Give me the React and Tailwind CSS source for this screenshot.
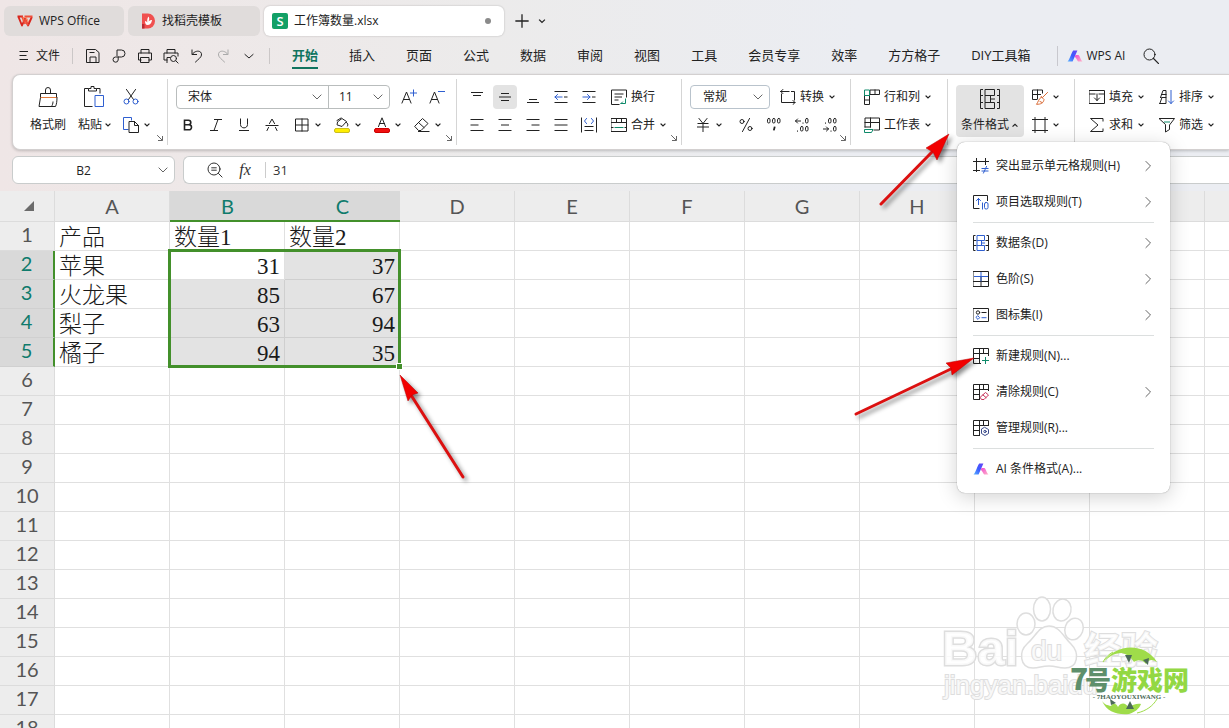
import React from "react";

const BLUE = "#2f5fd0";
const GREEN = "#0e8a6a";

function Ic({ children, className = "size-4", box = "0 0 16 16" }) {
  return (
    <svg aria-hidden="true" viewBox={box} className={`shrink-0 ${className}`} fill="none" stroke="currentColor" strokeWidth="1" strokeLinecap="square">
      {children}
    </svg>
  );
}

function Caret({ up }) {
  return (
    <Ic className="size-2" box="0 0 8 8">
      <path d={up ? "M2 5.2 4 3.4 6 5.2" : "M2 3 4 5 6 3"} strokeWidth="1.2" />
    </Ic>
  );
}

function WideCaret() {
  return (
    <Ic className="pointer-events-none absolute right-[5px] top-1/2 size-3 -translate-y-1/2 text-[#666]" box="0 0 12 12">
      <path d="M2 4l4 4 4-4" />
    </Ic>
  );
}

function Launcher() {
  return (
    <button aria-label="更多设置" className="absolute bottom-[3px] right-[3px] text-[#666]">
      <Ic className="size-2" box="0 0 8 8">
        <path d="M1.500 1.500 6 6M6.500 2.500v4h-4" />
      </Ic>
    </button>
  );
}

function AiMark() {
  return (
    <svg aria-hidden="true" viewBox="0 0 16 16" className="size-4 shrink-0">
      <defs>
        <linearGradient id="aiBlue" x1="0" y1="1" x2="1" y2="0">
          <stop offset="0" stopColor="#5ab4ff" />
          <stop offset=".5" stopColor="#3b5bff" />
          <stop offset="1" stopColor="#6a45f5" />
        </linearGradient>
        <linearGradient id="aiPink" x1="0" y1="0" x2="1" y2="1">
          <stop offset="0" stopColor="#f04bd0" />
          <stop offset="1" stopColor="#ffb3c8" />
        </linearGradient>
      </defs>
      <path d="M6.200 2.400h4.200L5.600 13.600H.5c2.200-2 3.500-8 5.700-11.200z" fill="url(#aiBlue)" />
      <path d="M8.500 7h2.800c1.300 0 2.200 4.600 4.200 6.600h-3.700C10.200 13.600 9.600 9.500 7.600 9z" fill="url(#aiPink)" />
    </svg>
  );
}

const quick = [
  ["保存", <path key="a" d="M2 1.500h8.500l3.500 3v10H2zM5 14V9h6v5M5 4.500h4" />],
  ["分享", <path key="a" d="M6 7.500V2h4.500a3.300 3.300 0 0 1 0 7H4.500a2.600 2.600 0 1 0 2.700 3V9" />],
  ["打印", <path key="a" d="M4 5V1.500h8V5M4 12H1.500V5h13v7H12M4 9.500h8v5H4z" />],
  ["打印预览", <g key="a"><path d="M4 5V1.500h8V5M4 12H1V5h14v3M4 14.500V9.500h3" /><circle cx="10.500" cy="10.500" r="3" /><path d="m13 13 2 2" /></g>],
  ["撤销", <path key="a" d="M3 2v4.500h4.500M3.500 6C6 2 13 2 12.500 7c-.3 2.500-3.500 4.500-6 7" />],
  ["恢复", <path key="a" className="text-[#aaa]" stroke="currentColor" d="M13 2v4.500H8.500M12.500 6C10 2 3 2 3.500 7c.3 2.500 3.500 4.500 6 7" />],
];

const tabs = ["开始", "插入", "页面", "公式", "数据", "审阅", "视图", "工具", "会员专享", "效率", "方方格子", "DIY工具箱"];

function TitleBar() {
  return (
    <header className="flex items-center gap-1 pl-1 pt-1.5 text-xs">
      <button className="flex h-[30px] w-[120px] items-center gap-1.5 rounded-md bg-[#e0dcdb] pl-[13px]">
        <svg aria-hidden="true" viewBox="0 0 16 16" className="size-4" fill="none" strokeWidth="1.900" strokeLinejoin="round">
          <path d="M.5 3.500h5.500M1.500 4 5 12.500 8 5.500l3 7L14.800 4" stroke="#d9251d" />
          <path d="M5 3.500 8.200 11M7.500 3.500h8M11 12.500 8 5.500" stroke="#f0503a" />
          <path d="M5.800 7.500 7 4M9 4l2.500 5" stroke="#ff7a4a" strokeWidth="1" />
        </svg>
        WPS Office
      </button>
      <button className="flex h-[30px] w-[132px] items-center gap-1.5 rounded-md bg-[#e0dcdb] pl-3">
        <svg aria-hidden="true" viewBox="0 0 16 16" className="size-4">
          <path d="M2 .5h6A7 7.500 0 0 1 8 15.500H2z" fill="#f0504f" />
          <path d="M2 11h2.500v4.500H2z" fill="#b92c35" />
          <path d="M8.500 3.500c1 1.500 1 3 0 5 1-1 2-1.500 3.500-1.500-.5 3.500-2 5-4.500 5C5.500 12 5 10 5 8c1.200.2 1.800.7 2.300 1.500C7 7 7.300 5 8.500 3.500z" fill="#fff" />
        </svg>
        找稻壳模板
      </button>
      <button className="flex h-[30px] w-[240px] items-center gap-1.5 rounded-md bg-white pl-2 pr-[13px] shadow-[0_0_2px_rgba(0,0,0,0.25)]">
        <span className="flex size-4 items-center justify-center rounded-[2px] bg-[#12a066] text-[13px] font-semibold leading-4 text-white">S</span>
        工作簿数量.xlsx
        <span className="ml-auto size-1.5 rounded-full bg-[#8a8a8a]" />
      </button>
      <button aria-label="新建" className="ml-1.5">
        <Ic className="size-4"><path d="M8 2v12M2 8h12" strokeWidth="1.300" /></Ic>
      </button>
      <button aria-label="标签列表" className="ml-0.5">
        <Ic className="size-3" box="0 0 12 12"><path d="M3.500 5 6 7.500 8.500 5" strokeWidth="1.200" /></Ic>
      </button>
    </header>
  );
}

function MenuRow() {
  return (
    <nav className="flex h-[38px] items-center whitespace-nowrap pt-0.5 text-[13px]">
      <button className="ml-4 flex items-center gap-1 text-xs">
        <Ic><path d="M4 3.500h7.500M4 7.500h6M4 11.500h7.500" /></Ic>
        文件
      </button>
      <span className="ml-3 h-4 w-px bg-[#cbc7c7]" />
      <div className="ml-3 flex items-center gap-2.5">
        {quick.map(([label, art]) => (
          <button key={label} aria-label={label}><Ic>{art}</Ic></button>
        ))}
        <button aria-label="更多命令"><Ic><path d="M4 6.500 8 10l4-3.500" /></Ic></button>
      </div>
      <span className="ml-3 h-4 w-px bg-[#cbc7c7]" />
      <div className="ml-[22px] flex items-center gap-[31px]">
        {tabs.map((t, i) => (
          <button key={t} className={i === 0 ? "h-[26px] border-y-2 border-t-transparent border-b-[#10745f] font-bold text-[#10745f]" : "h-[26px]"}>
            {t}
          </button>
        ))}
      </div>
      <span className="ml-[26px] h-5 w-px bg-[#c8c8ce]" />
      <button className="ml-[9px] flex items-center gap-1 text-xs"><AiMark />WPS AI</button>
      <button aria-label="搜索" className="ml-[18px]">
        <Ic><circle cx="6.500" cy="6.500" r="5.500" /><path d="m10.500 10.500 5 5" strokeWidth="1.200" /></Ic>
      </button>
    </nav>
  );
}

function Tool({ label, text, caret, active, className = "", children }) {
  return (
    <button aria-label={label} className={`flex h-6 items-center gap-1 whitespace-nowrap ${active ? "rounded bg-[#e3e3e3]" : ""} ${className}`}>
      {children}
      {text}
      {caret && <Caret />}
    </button>
  );
}

function Group({ children, className = "" }) {
  return (
    <section className={`relative my-1 flex shrink-0 border-r border-[#d5d5d5] ${className}`}>
      {children}
    </section>
  );
}

const lines = (arr) => arr.map(([x, y, w]) => <path key={`${x}-${y}`} d={`M${x} ${y}h${w}`} />);

const menu = [
  ["突出显示单元格规则(H)", true, <g key="g"><path d="M3.500 .5v13M12.500 .5v6M.5 3.500h15M.5 12.500h6" /><path stroke={BLUE} d="M9 10.500h6M9 13h6M13.500 8.500l-3 6.500" /></g>],
  ["项目选取规则(T)", true, <g key="g"><path d="M6 14.500H.5v-13h14v5" /><path stroke={BLUE} d="M5.500 10.500V4.500M3.500 6.500l2-2 2 2M9.500 9v6" /><rect stroke={BLUE} x="11.500" y="8.500" width="3.500" height="6.500" rx="1.500" /></g>],
  "-",
  ["数据条(D)", true, <g key="g"><path d="M2 .5H.5v15H2M.5 5.500H3M.5 10.500H3M14 .5h1.500v15H14M13 5.500h2.500M13 10.500h2.500" /><path stroke={BLUE} d="M4.500 .5h7v5h-7zM4.500 5.500h4v5h-4zM4.500 10.500h7v5h-7zM11.500 8h-3" /></g>],
  ["色阶(S)", true, <g key="g"><path d="M.5 .5h15v15H.5zM8 5.500v10M.5 10.500h15" /><path stroke={BLUE} d="M1.500 5.500h13M8 1.500V10" /></g>],
  ["图标集(I)", true, <g key="g"><path d="M.5 1.500h15v13H.5zM9 5.500h4" /><circle cx="5" cy="5.500" r="1.700" /><path stroke={BLUE} d="m5 9 1.700 1.700L5 12.400l-1.700-1.700zM9 10.700h4" /></g>],
  "-",
  ["新建规则(N)...", false, <g key="g"><path d="M7.500 15.500H.5V.5h15v7M.5 5.500h15M6.500 .5v15M.5 10.500h6M10.500 .5v5" /><path stroke={GREEN} d="M12.500 9.500v6M9.500 12.500h6" /></g>],
  ["清除规则(C)", true, <g key="g"><path d="M6.500 15.500H.5V.5h15v6M.5 5.500h15M6.500 .5v15M.5 10.500h6M10.500 .5v5" /><path stroke="#c8325a" d="m7.500 13 5-4.500 3 2.500-4.500 4.500H9zM10 11l3 2.500" /></g>],
  ["管理规则(R)...", false, <g key="g"><path d="M6.500 15.500H.5V.5h15v5M.5 5.500h15M6.500 .5v15M.5 10.500h6M10.500 .5v5" /><g stroke="#3d4d8c"><path d="m12 7.500 3.500 2v4l-3.500 2-3.500-2v-4z" /><circle cx="12" cy="11.500" r="1.200" /></g></g>],
  "-",
  ["AI 条件格式(A)...", false, null],
];

function FormatMenu() {
  return (
    <div role="menu" className="absolute left-px top-full z-20 mt-[5px] w-[213px] rounded-lg bg-white py-1.5 text-xs shadow-[0_0_1px_rgba(0,0,0,0.5),0_4px_20px_rgba(0,0,0,0.18)]">
      {menu.map((m, i) =>
        m === "-" ? (
          <div key={i} className="mx-4 my-0.5 h-px bg-[#dcdfdf]" />
        ) : (
          <button key={i} role="menuitem" className="flex h-9 w-full items-center gap-[7px] whitespace-nowrap px-4">
            {m[2] ? <Ic>{m[2]}</Ic> : <AiMark />}
            {m[0]}
            {m[1] && (
              <Ic className="ml-auto size-3 text-[#666]" box="0 0 12 12"><path d="m4 1.500 4.500 4.500L4 10.500" /></Ic>
            )}
          </button>
        )
      )}
    </div>
  );
}

function Ribbon() {
  return (
    <div className="ml-3 flex h-[76px] rounded-l-lg border border-r-0 border-[#d3d0d0] bg-white text-xs shadow-[0_1px_3px_rgba(0,0,0,0.2)]">
      <Group className="w-[155px] pl-[17px]">
        <button className="mt-1.5 flex h-[52px] w-9 flex-col items-center justify-between whitespace-nowrap">
          <Ic className="size-6" box="0 0 24 24">
            <path d="M9.500 8.500V5a2 2 0 0 1 5 0v3.500M4.500 12.500v-4h16v4M4.500 12.500 3 21.500h16.500c1-2 1.500-5 1.500-9M15.500 21.500c1-1.500 1.500-3 1.500-4.500" />
            <path d="M5 12.500h15" stroke="#e07a3c" />
          </Ic>
          <span className="flex h-6 items-center">格式刷</span>
        </button>
        <button className="ml-[11px] mt-1.5 flex h-[52px] w-9 flex-col items-center justify-between whitespace-nowrap">
          <Ic className="size-6" box="2 0 24 24">
            <path d="M7 3.500H3.500v18H11M16 3.500h3V8M7.500 5.500V3.500h2.500v-2h3v2h2.500v2z" />
            <path d="M14.500 10.500h8v11h-8z" stroke={BLUE} />
          </Ic>
          <span className="flex h-6 items-center gap-0.5">粘贴<Caret /></span>
        </button>
        <div className="ml-2.5 mt-1.5 flex flex-col gap-1">
          <Tool label="剪切">
            <Ic><path d="M3.500 .5 10.500 10.500M12.500 .5 5.500 10.500" /><g stroke={BLUE}><circle cx="3.500" cy="12.500" r="2.500" /><circle cx="12.500" cy="12.500" r="2.500" /></g></Ic>
          </Tool>
          <Tool label="复制" caret>
            <Ic className="size-4" box="1 1 16 16"><path d="M6 13.500H1.500v-12h8V4" stroke={BLUE} /><path d="M7.500 5.500h5l4 4v7h-9zM12.500 5.500v4h4" /></Ic>
          </Tool>
        </div>
        <Launcher />
      </Group>

      <Group className="w-[289px] pl-2">
        <div className="mt-1.5 flex flex-col gap-1">
          <div className="flex items-center">
            <div className="flex h-6 rounded border border-[#b9bdbd]">
              <label className="relative w-[152px] border-r border-[#b9bdbd]">
                <select aria-label="字体" className="size-full appearance-none pl-[11px]"><option>宋体</option></select>
                <WideCaret />
              </label>
              <label className="relative w-[60px]">
                <select aria-label="字号" className="size-full appearance-none pl-2.5"><option>11</option></select>
                <WideCaret />
              </label>
            </div>
            <Tool label="增大字号" className="ml-[5px] w-7 justify-center">
              <Ic><path d="M1 14 5.500 3 10 14M2.500 10.500h6" /><path stroke={BLUE} d="M12.500 1v6M9.500 4h6" /></Ic>
            </Tool>
            <Tool label="减小字号" className="w-7 justify-center">
              <Ic><path d="M1 14 5.500 3 10 14M2.500 10.500h6" /><path stroke={BLUE} d="M9.500 2.500h6" /></Ic>
            </Tool>
          </div>
          <div className="-ml-0.5 flex items-center">
            <Tool label="加粗" className="w-7 justify-center">
              <Ic><path strokeWidth="1.600" d="M4.500 3.200h4a2.300 2.300 0 0 1 0 4.600h-4zM4.500 7.800h4.500a2.500 2.500 0 0 1 0 5H4.500z" /></Ic>
            </Tool>
            <Tool label="倾斜" className="w-7 justify-center"><Ic><path d="M6.500 2.500h7M2.500 13.500h7M10 2.500 6 13.500" /></Ic></Tool>
            <Tool label="下划线" className="w-7 justify-center"><Ic><path d="M4.500 2v5.500c0 4.500 7 4.500 7 0V2M3.500 13.500h9" /></Ic></Tool>
            <Tool label="删除线" className="w-7 justify-center"><Ic><path d="M2 8.500h12M5.500 6.500 8 2l2.500 4.500M4.500 10.500 3 13.500M11.500 10.500l1.500 3" /></Ic></Tool>
            <div className="ml-2 flex gap-3">
              <Tool label="边框" caret><Ic><path d="M2 2h12v12H2zM8 2v12M2 8h12" /></Ic></Tool>
              <Tool label="填充颜色" caret>
                <Ic><path d="M4 4.500 8 1.500l4.500 3-4.500 5L3.500 8zM12.500 5.500c1.500 1 1.800 2 1 3.500M3 3.500l4-2.500" /><rect x="0.500" y="11.500" width="15" height="4" rx="1.500" fill="#ffee00" stroke="#c9bd20" /></Ic>
              </Tool>
              <Tool label="字体颜色" caret>
                <Ic><path d="M4.500 9.500 8 .8l3.500 8.700M5.500 6.500h5" /><rect x="0.500" y="11.500" width="15" height="4" rx="1.500" fill="#f01010" stroke="#c00" /></Ic>
              </Tool>
              <Tool label="清除" caret><Ic><path d="m1 9 7.500-7.500L14 6.500l-7 7H5zM4.500 5.500l5.500 5M4.500 14.500H15" /></Ic></Tool>
            </div>
          </div>
        </div>
        <Launcher />
      </Group>

      <Group className="w-[225px] pl-1.5">
        <div className="mt-1.5 flex flex-col gap-1">
          <div className="flex items-center">
            <Tool label="顶端对齐" className="w-7 justify-center"><Ic>{lines([[2.5, 3.5, 11], [4.5, 6.5, 7]])}</Ic></Tool>
            <Tool label="垂直居中" active className="mx-0.5 w-6 justify-center"><Ic>{lines([[4.5, 4.5, 7], [2.5, 8, 11], [4.5, 11.5, 7]])}</Ic></Tool>
            <Tool label="底端对齐" className="w-7 justify-center"><Ic>{lines([[4.5, 10.5, 7], [2.5, 13.5, 11]])}</Ic></Tool>
            <Tool label="减少缩进" className="w-7 justify-center"><Ic><path d="M2 2.500h12M2 13.500h12M11.500 8h2.500" /><path stroke={BLUE} d="M2 8h7M4.500 5.500 2 8l2.500 2.500" /></Ic></Tool>
            <Tool label="增加缩进" className="w-7 justify-center"><Ic><path d="M2 2.500h12M2 13.500h12M11.500 8h2.500" /><path stroke={BLUE} d="M2 8h7M6.500 5.500 9 8l-2.500 2.500" /></Ic></Tool>
            <Tool className="ml-2" text="换行"><Ic><path d="M8 15.500H.5V1h15v7M4 5h8M4 8h6.500M4 11h3" /><path stroke={GREEN} d="M14.500 10v4.500H10M11.500 13 10 14.500" /></Ic></Tool>
          </div>
          <div className="flex items-center">
            <Tool label="左对齐" className="w-7 justify-center"><Ic>{lines([[2, 2.5, 12], [2, 8, 7], [2, 13.5, 12]])}</Ic></Tool>
            <Tool label="水平居中" className="w-7 justify-center"><Ic>{lines([[2, 2.5, 12], [4.5, 8, 7], [2, 13.5, 12]])}</Ic></Tool>
            <Tool label="右对齐" className="w-7 justify-center"><Ic>{lines([[2, 2.5, 12], [7, 8, 7], [2, 13.5, 12]])}</Ic></Tool>
            <Tool label="两端对齐" className="w-7 justify-center"><Ic>{lines([[2, 2.5, 12], [2, 8, 12], [2, 13.5, 12]])}</Ic></Tool>
            <Tool label="分散对齐" className="w-7 justify-center"><Ic><path d="M.5 1v14M15.500 1v14M4 9.500h8M4 13.500h8" /><path stroke={BLUE} d="M5.500 1.500 3.500 4l2 2.500M10.500 1.500l2 2.500-2 2.500" /></Ic></Tool>
            <Tool className="ml-2" text="合并" caret><Ic><path d="M.5 1.500h15v13H.5zM.5 5.500h15M5.500 1.500v4M10.500 1.500v4M.5 10.500h1.500M14 10.500h1.500" /><path stroke={GREEN} d="M4 10.500h8" /></Ic></Tool>
          </div>
        </div>
        <Launcher />
      </Group>

      <Group className="w-[169px] pl-2">
        <div className="mt-1.5 flex flex-col gap-1">
          <div className="flex items-center">
            <label className="relative h-6 w-20 rounded border border-[#b9c3cc]">
              <select aria-label="数字格式" className="size-full appearance-none pl-3"><option>常规</option></select>
              <WideCaret />
            </label>
            <Tool className="ml-2.5" text="转换" caret><Ic><path d="M11.500 2.500h3V11M.8 2.500H9M.8 2.500 2.800 .5M.8 2.500l2 2M1.500 5v8.500H15M13 11.500l2 2-2 2" /></Ic></Tool>
          </div>
          <div className="flex items-center">
            <Tool label="货币" caret className="ml-[5px]"><Ic><path d="M4 1.500l4 5 4-5M3 6.500h10M2.500 10h11M8 6.500v8" /></Ic></Tool>
            <Tool label="百分比" className="ml-[9px] w-7 justify-center"><Ic><circle cx="4" cy="4.500" r="2" /><circle cx="12" cy="11.500" r="2" /><path d="M11.500 1.500 4.500 14.500" /></Ic></Tool>
            <Tool label="千位分隔" className="w-7 justify-center"><Ic><g><rect x="1.500" y="1.500" width="2.500" height="4.500" rx="1.200" /><rect x="6.500" y="1.500" width="2.500" height="4.500" rx="1.200" /><rect x="11.500" y="1.500" width="2.500" height="4.500" rx="1.200" /></g><path strokeWidth="1.800" d="M8.500 10.500 8 12.500" /></Ic></Tool>
            <Tool label="增加小数位" className="w-7 justify-center"><Ic><path d="M1.500 4h5M3.500 2l-2 2 2 2M9 6v.2M3.500 14v.2" /><rect x="11.500" y="1.500" width="2.500" height="4.500" rx="1.200" /><rect x="6.500" y="9.500" width="2.500" height="4.500" rx="1.200" /><rect x="11.500" y="9.500" width="2.500" height="4.500" rx="1.200" /></Ic></Tool>
            <Tool label="减少小数位" className="w-7 justify-center"><Ic><path d="M1.500 12h5M4.500 10l2 2-2 2M3.500 6v.2M9 14v.2" /><rect x="6.500" y="1.500" width="2.500" height="4.500" rx="1.200" /><rect x="11.500" y="1.500" width="2.500" height="4.500" rx="1.200" /><rect x="11.500" y="9.500" width="2.500" height="4.500" rx="1.200" /></Ic></Tool>
          </div>
        </div>
        <Launcher />
      </Group>

      <Group className="w-[97px] pl-[13px]">
        <div className="mt-1.5 flex flex-col gap-1">
          <Tool text="行和列" caret><Ic><path d="M1 6.500h4.500v9H1zM1 11h4.500M6.500 1h9v4.500h-9zM11 1v4.500" /><path stroke={GREEN} d="M1 1h4.500v5.500H1z" /></Ic></Tool>
          <Tool text="工作表" caret><Ic><path d="M1 10V1h14.500v12H10M1 5.500h14.500M6.500 1v9M1 10h5.500" /><path stroke={GREEN} d="M1 12.500h8l-1.500 3H1z" /></Ic></Tool>
        </div>
      </Group>

      <Group className="w-[127px] pl-2">
        <div className="relative mt-1.5 h-[52px]">
          <button aria-haspopup="menu" aria-expanded="true" className="flex h-[52px] w-[68px] flex-col items-center justify-between whitespace-nowrap rounded bg-[#e3e3e3] pt-0.5">
            <Ic className="size-6" box="0 0 24 24">
              <path d="M4.500 2.500h-2v19h2M2.500 8.500h2M2.500 15.500h2M19.500 2.500h2v19h-2M19.500 8.500h2M19.500 15.500h2M7.500 2.500h9v6h-9zM7.500 8.500h5v7h-5zM7.500 15.500h9v6h-9zM16.500 12h-4" />
            </Ic>
            <span className="flex h-6 items-center gap-0.5">条件格式<Caret up /></span>
          </button>
          <FormatMenu />
        </div>
        <div className="ml-2 mt-1.5 flex flex-col gap-1">
          <Tool label="单元格样式" caret><Ic><path d="M5 10.500H.5V1h10v3M.5 5.500h8M5.500 1v8.500" /><path stroke="#d96a35" d="M15.500 3.500 10.500 8.500M9.500 8l2.500 2.500c-.5 3.500-3 4.800-7.500 4.800 1.500-1.500 2-5.800 5-7.300zM8 12.500l2 1" /></Ic></Tool>
          <Tool label="单元格" caret><Ic><path d="M3 .5v15M13 .5v15M.5 2.500h15M.5 13.500h15" /></Ic></Tool>
        </div>
      </Group>

      <Group className="border-r-0 pl-[14px]">
        <div className="mt-1.5 grid h-[52px] grid-cols-[70px_auto] grid-rows-2 gap-y-1">
          <Tool text="填充" caret><Ic><path d="M.5 1.500h15v13H.5zM.5 5h5.500M10 5h5.500M8 5v6.500M5.500 9 8 11.500 10.500 9" /></Ic></Tool>
          <Tool text="排序" caret><Ic><path d="M1.500 8.500 4 1.500h3v7M2.500 5.500H7M.8 14.500 3 8.500M.8 14.500H7v-6H3" /><path stroke={BLUE} d="M12 1.500v13M9.500 12 12 14.500l2.500-2.500" /></Ic></Tool>
          <Tool text="求和" caret><Ic><path d="M14 4V1.500H1.500L9 8l-7.500 6.500H14V12" /></Ic></Tool>
          <Tool text="筛选" caret><Ic><path d="M.5 1.500h15L10.500 8v4.500l-4 2.500V8z" /><path stroke={GREEN} d="M5.500 5h5" /></Ic></Tool>
        </div>
      </Group>
    </div>
  );
}

function FormulaBar() {
  return (
    <div className="mt-1.5 flex h-7 gap-2 pl-3 text-[13px]">
      <label className="relative w-[163px] rounded-md border border-[#c9cccc] bg-white">
        <input aria-label="名称框" defaultValue="B2" className="size-full pr-5 text-center text-xs outline-none" />
        <WideCaret />
      </label>
      <div className="flex flex-1 items-center rounded-l-md border border-r-0 border-[#c9cccc] bg-white pl-[23px] text-[#333]">
        <button aria-label="查找"><Ic><circle cx="7" cy="7" r="6" /><path d="M4.800 5.800h4.400M4.800 8.200h4.400M11.500 11.500l3.500 3.500" /></Ic></button>
        <button className="ml-3.5 w-4 font-['Liberation_Serif',serif] text-base italic leading-5">fx</button>
        <span className="ml-3 h-4 w-px bg-[#ccc]" />
        <input aria-label="编辑栏" defaultValue="31" className="h-full min-w-0 flex-1 pl-[7px] outline-none" />
      </div>
    </div>
  );
}

const cols = ["A", "B", "C", "D", "E", "F", "G", "H", "I", "J", "K"];
const rows = Array.from({ length: 18 }, (_, i) => i + 1);
const data = {
  1: ["产品", "数量1", "数量2"],
  2: ["苹果", 31, 37],
  3: ["火龙果", 85, 67],
  4: ["梨子", 63, 94],
  5: ["橘子", 94, 35],
};

function Sheet() {
  return (
    <main className="relative mt-[7px] min-h-0 flex-1 overflow-hidden">
      <table className="w-[1320px] table-fixed border-separate border-spacing-0 bg-white">
        <colgroup>
          <col className="w-[55px]" />
          {cols.map((c) => <col key={c} className="w-[115px]" />)}
        </colgroup>
        <thead className="font-['Lato',sans-serif] text-xl">
          <tr className="h-[31px]">
            <th aria-label="全选" className="border-b border-r border-[#dcdcdc] bg-[#ededed]">
              <svg aria-hidden="true" viewBox="0 0 10 10" className="ml-auto mr-5 size-2.5"><path d="M10 0v10H0z" fill="#6b6b6b" /></svg>
            </th>
            {cols.map((c) => {
              const on = c === "B" || c === "C";
              return (
                <th key={c} className={on ? "border-b-2 border-[#43902b] bg-[#d9d9d9] p-0 font-normal leading-7 text-[#0f7b6c]" : "border-b border-r border-[#dcdcdc] bg-[#ededed] p-0 font-normal leading-7 text-[#555]"}>
                  {c}
                </th>
              );
            })}
          </tr>
        </thead>
        <tbody>
          {rows.map((r) => {
            const on = r >= 2 && r <= 5;
            return (
              <tr key={r} className="h-[29px]">
                <th className={on ? "border-b border-r-2 border-b-[#d0d0d0] border-r-[#43902b] bg-[#d9d9d9] p-0 pb-1 font-['Lato',sans-serif] text-xl font-normal leading-6 text-[#0f7b6c]" : "border-b border-r border-[#dcdcdc] bg-[#ededed] p-0 pb-1 font-['Lato',sans-serif] text-xl font-normal leading-6 text-[#555]"}>
                  {r}
                </th>
                {cols.map((c, ci) => {
                  const v = data[r]?.[ci];
                  const shaded = on && (c === "C" || (c === "B" && r > 2));
                  return (
                    <td
                      key={c}
                      className={`h-[29px] border-b border-r p-0 pl-1 pr-1 pt-1 font-['Liberation_Serif','Noto_Sans_CJK_SC',serif] text-[23px] font-light leading-6 text-[#1a1a1a] ${shaded ? "border-[#cfcfcf] bg-[#e3e3e3]" : "border-[#e0e0e0]"} ${typeof v === "number" ? "text-right" : "text-left"}`}
                    >
                      {v}
                    </td>
                  );
                })}
              </tr>
            );
          })}
        </tbody>
      </table>
      <div className="pointer-events-none absolute left-[168px] top-[58px] h-[119px] w-[233px] border-[3px] border-[#43902b]">
        <span className="absolute -bottom-1 -right-1 size-[5px] bg-[#43902b] outline outline-white" />
      </div>
    </main>
  );
}

function Arrow({ className, box, line, head }) {
  return (
    <svg aria-hidden="true" viewBox={box} className={`pointer-events-none absolute z-30 overflow-visible drop-shadow-[3px_3px_2px_rgba(0,0,0,0.45)] ${className}`}>
      <path d={line} stroke="#dc1010" strokeWidth="3" strokeLinecap="round" />
      <path d={head} fill="#f20000" stroke="#b80000" strokeWidth="0.500" />
    </svg>
  );
}

function Watermarks() {
  return (
    <svg aria-hidden="true" viewBox="0 0 289 148" className="pointer-events-none absolute bottom-0 right-0 h-[148px] w-[289px]">
      <g fill="#fff" fillOpacity="0.8" stroke="#dedede" strokeWidth="1.500">
        <ellipse cx="86" cy="44" rx="9" ry="11" />
        <ellipse cx="102" cy="29" rx="8.500" ry="12" />
        <ellipse cx="122" cy="30" rx="9" ry="11" transform="rotate(12 122 30)" />
        <ellipse cx="134" cy="49" rx="9" ry="11" transform="rotate(20 134 49)" />
        <path d="M109 46c10 0 14 10 22 18 9 9 7 24-6 24-8 0-8-2-16-2s-9 2-16 2c-14 0-14-17-6-24 9-8 12-18 22-18z" />
        <g fontFamily="Liberation Sans, Noto Sans CJK SC, sans-serif" fontWeight="700" paintOrder="stroke">
          <text x="2" y="85" fontSize="49" strokeWidth="3">Bai</text>
          <text x="91" y="80" fontSize="28" fontWeight="400" strokeWidth="2">du</text>
          <text x="144" y="84" fontSize="37" strokeWidth="2">经验</text>
          <text x="4" y="114" fontSize="26" fontWeight="400" strokeWidth="2">jingyan.baidu</text>
        </g>
      </g>
      <g transform="translate(-20 0)">
        <path d="M183 83c12-20 42-21 54-1-5-3-8-3-11 2-4-5-9-4-12-2-4-6-8-8-12-9-8 0-14 4-19 10zM182 121c3 4 5 4 9 5 2-3 5-3 7 1 3-5 8-4 10 0 5-2 9-4 13-3-2 5-6 8-12 10-12 1-22-2-27-13z" fill="#9fdc4a" />
        <path d="M217 133c9-2 16-7 20-14M183 82c2-4 6-8 10-10" stroke="#9fdc4a" fill="none" />
        <g fill="#4c6b58">
          <path d="M205 75h7l-3 8zM223 80l6-2-1 7zM190 119l6 4-5 2zM206 129l4-8 4 8z" />
        </g>
        <g fontFamily="Noto Sans CJK SC, sans-serif" fontWeight="900" fontSize="26">
          <text x="150" y="110" fill="#5e8f6b" fontSize="30">7</text>
          <text x="165" y="110" fill="#5e8f6b">号</text>
          <text x="191" y="110" fill="#93d843">游戏网</text>
        </g>
        <text x="209" y="119" fill="#4c6b58" fontFamily="Liberation Serif, serif" fontSize="7" fontWeight="700" textAnchor="middle">- 7HAOYOUXIWANG -</text>
      </g>
    </svg>
  );
}

export default function App() {
  return (
    <div className="relative flex h-screen flex-col overflow-hidden bg-[linear-gradient(90deg,#efe6e6_0%,#ecebeb_40%,#ebedf2_70%)] font-['Open_Sans','Noto_Sans_CJK_SC',sans-serif] text-[#222]">
      <TitleBar />
      <MenuRow />
      <Ribbon />
      <FormulaBar />
      <Sheet />
      <Watermarks />
      <Arrow className="left-[880px] top-[134px] h-[72px] w-[70px]" box="0 0 70 72" line="M1 70 52 18" head="M69 0 57 26 53 18 46 14z" />
      <Arrow className="left-[855px] top-[357px] h-[59px] w-[120px]" box="0 0 120 59" line="M1 57 98 11" head="M119 1 97 18 96 11 91 6z" />
      <Arrow className="left-[399px] top-[375px] h-[104px] w-[66px]" box="0 0 66 104" line="M64 102 12 20" head="M1 0 19 18 13 20 9 26z" />
    </div>
  );
}
